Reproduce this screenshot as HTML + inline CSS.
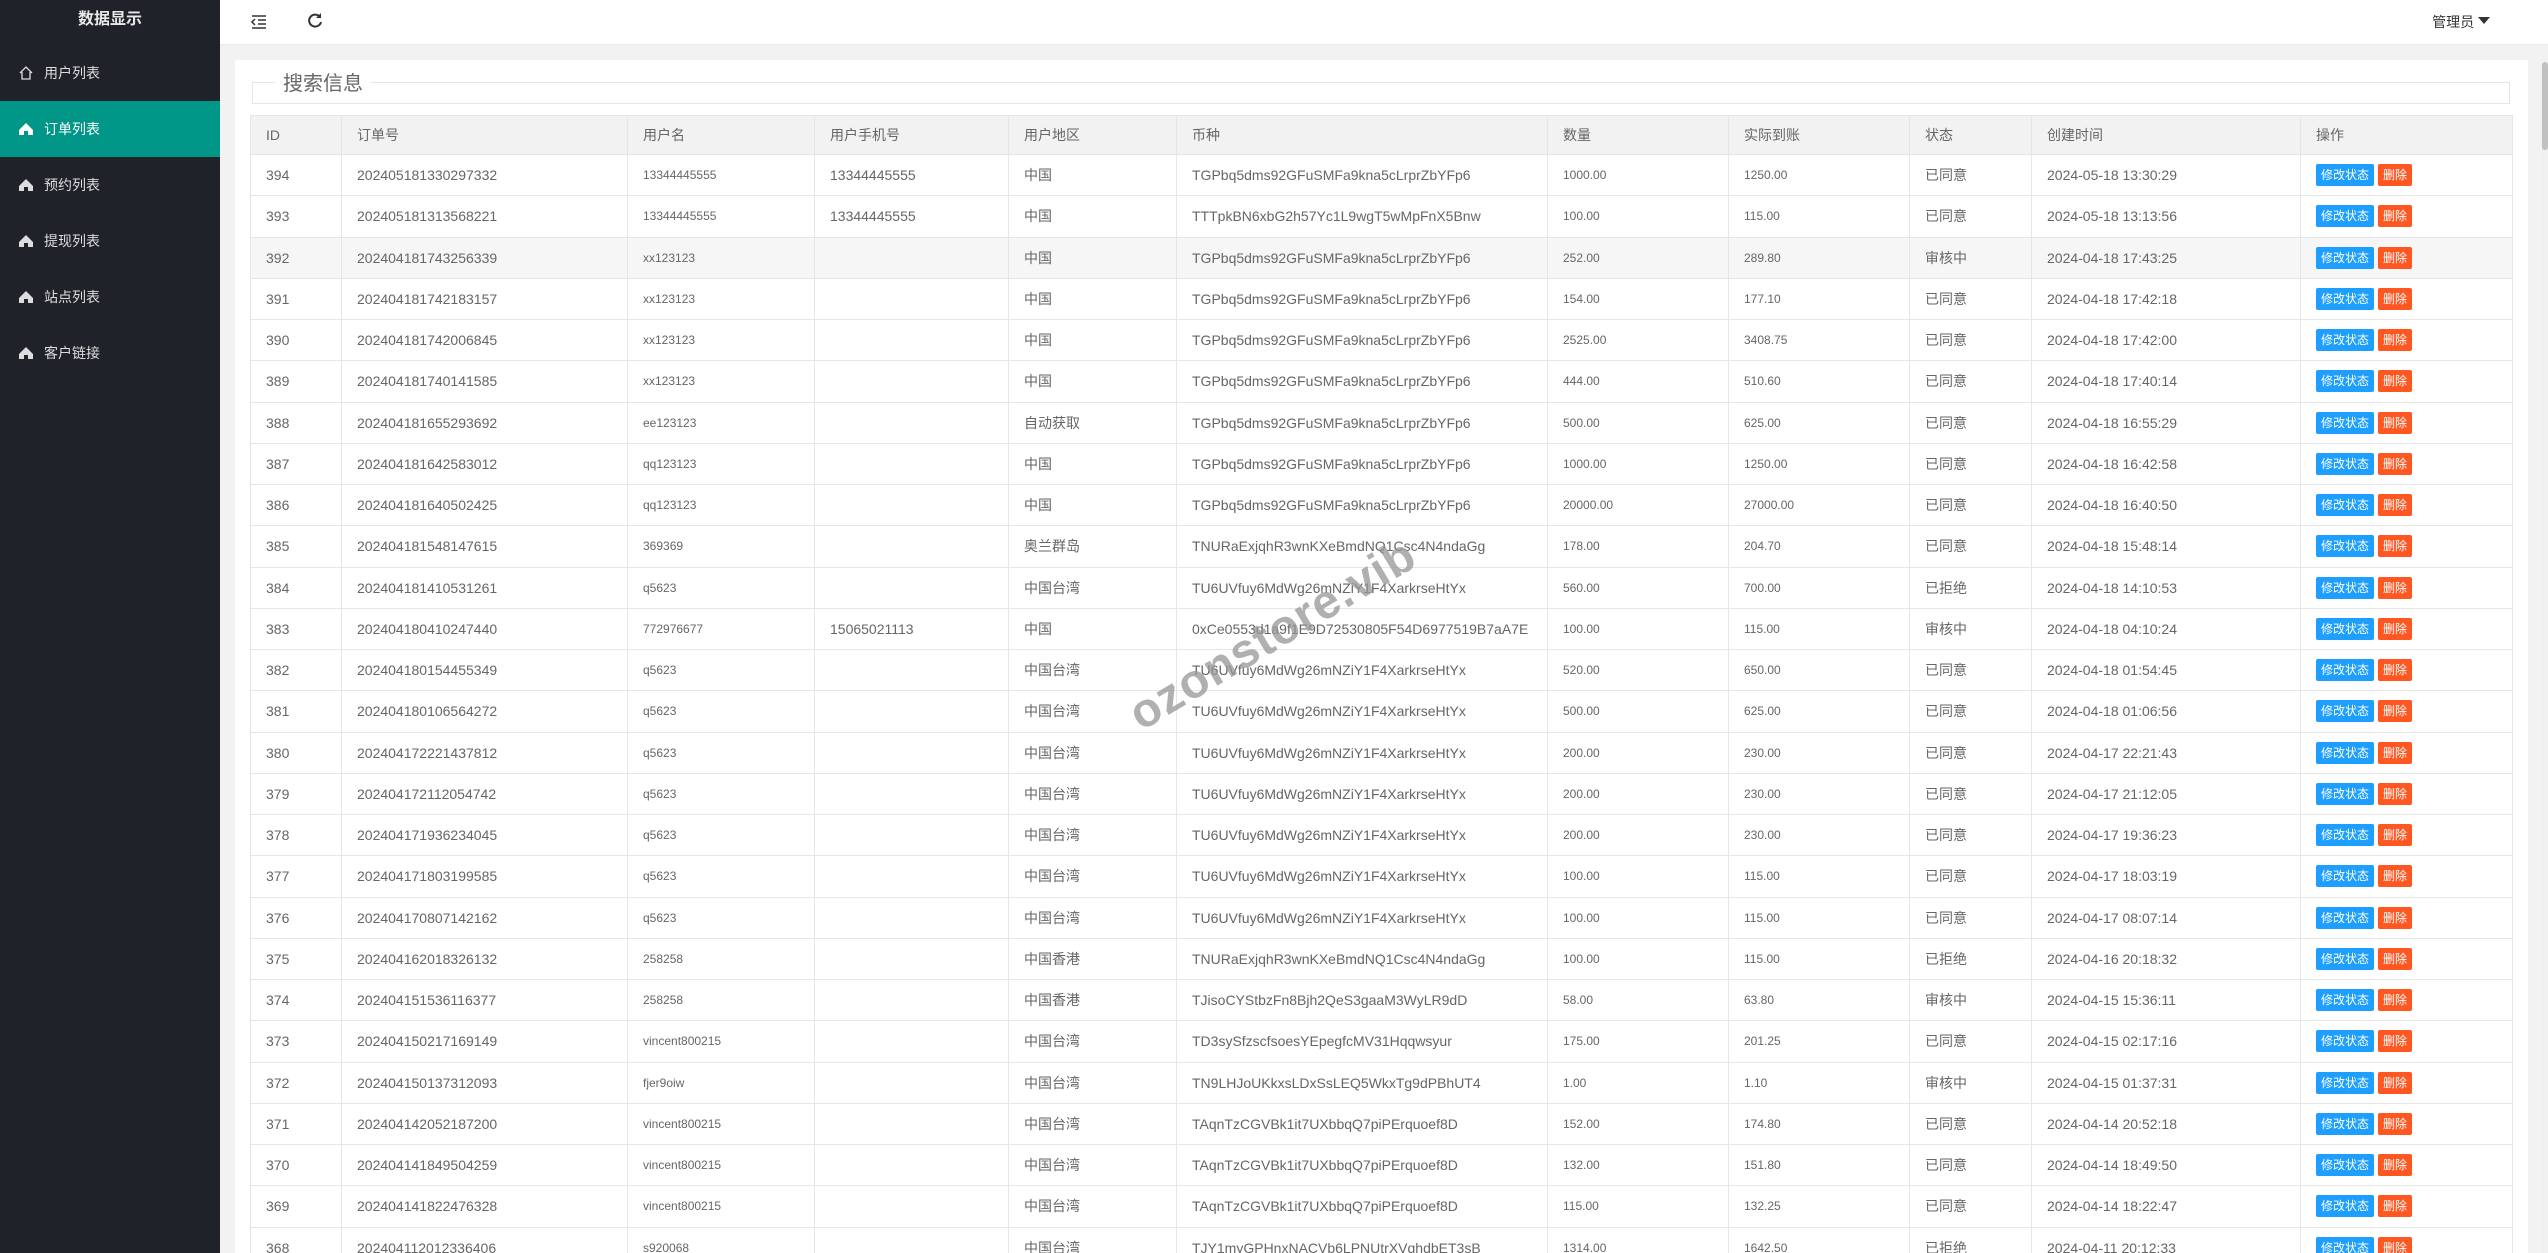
<!DOCTYPE html>
<html style="overflow:hidden;height:1253px"><head><meta charset="utf-8">
<style>
*{margin:0;padding:0;box-sizing:border-box}
body{width:2548px;height:1253px;overflow:hidden;background:#f2f2f2;font-family:"Liberation Sans","Noto Sans CJK SC",sans-serif;color:#666;position:relative}
.side{position:absolute;left:0;top:0;width:220px;height:1253px;background:#20222a}
.side .logo{height:45px;line-height:40px;text-align:center;color:#fff;font-size:16px;font-weight:bold;opacity:.9}
.side .it{position:absolute;left:0;width:220px;height:56px;line-height:56px;color:#ddd;font-size:14px;padding-left:44px}
.side .it.on{background:#009688;color:#fff}
.side .it svg{position:absolute;left:18px;top:20px}
.top{position:absolute;left:220px;top:0;right:0;height:45px;background:#fff;border-bottom:1px solid #eaeaea}
.card{position:absolute;left:235px;top:60px;width:2293px;height:1193px;background:#fff}
fieldset{position:absolute;left:252px;top:82px;width:2258px;height:22px;border:1px solid #e6e6e6;border-bottom-width:1px}
.legend{position:absolute;left:275px;top:67px;background:#fff;padding:0 8px;font-size:20px;color:#666}
table{position:absolute;left:250px;top:115px;width:2262px;border-collapse:collapse;table-layout:fixed}
td,th{border:1px solid #e6e6e6;padding:0 15px;font-size:14px;font-weight:normal;text-align:left;white-space:nowrap;overflow:hidden;color:#666}
th{height:39px;background:#f2f2f2}
td{height:41.25px}
td.s{font-size:12px}
tr.h td{background:#f6f6f6}
.b{display:inline-block;height:22px;line-height:22px;padding:0 5px;font-size:12px;color:#fff;background:#1e9fff;border-radius:2px;vertical-align:middle}
.b.r{background:#ff5722;margin-left:4px}
.wm{position:absolute;left:1110px;top:607px;font-size:48px;font-weight:bold;color:rgba(150,150,150,.75);transform:rotate(-31deg);letter-spacing:1px}
.sb{position:absolute;right:0;top:60px;width:6px;height:1193px;background:#f0f0f0}
.sb i{position:absolute;left:0;top:2px;width:6px;height:88px;background:#c1c1c1;border-radius:3px}
</style></head><body>
<div class="side">
<div class="logo">数据显示</div>
<div class="it" style="top:45px"><svg width="16" height="16" viewBox="0 0 16 16"><path d="M2 8 L8 2 L14 8 M4 7 V14 H12 V7" fill="none" stroke="#ddd" stroke-width="1.3"/></svg>用户列表</div>
<div class="it on" style="top:101px"><svg width="16" height="16" viewBox="0 0 16 16"><path d="M8 2 L15 9 V14 H10 V10 H6 V14 H1 V9 Z" fill="#fff"/></svg>订单列表</div>
<div class="it" style="top:157px"><svg width="16" height="16" viewBox="0 0 16 16"><path d="M8 2 L15 9 V14 H10 V10 H6 V14 H1 V9 Z" fill="#ddd"/></svg>预约列表</div>
<div class="it" style="top:213px"><svg width="16" height="16" viewBox="0 0 16 16"><path d="M8 2 L15 9 V14 H10 V10 H6 V14 H1 V9 Z" fill="#ddd"/></svg>提现列表</div>
<div class="it" style="top:269px"><svg width="16" height="16" viewBox="0 0 16 16"><path d="M8 2 L15 9 V14 H10 V10 H6 V14 H1 V9 Z" fill="#ddd"/></svg>站点列表</div>
<div class="it" style="top:325px"><svg width="16" height="16" viewBox="0 0 16 16"><path d="M8 2 L15 9 V14 H10 V10 H6 V14 H1 V9 Z" fill="#ddd"/></svg>客户链接</div>
</div>
<div class="top">
<svg style="position:absolute;left:30px;top:13px" width="18" height="18" viewBox="0 0 18 18"><path d="M2 3H16M8 7H16M8 11H16M2 15H16M5 6L2 9L5 12" fill="none" stroke="#333" stroke-width="1.5"/></svg>
<svg style="position:absolute;left:86px;top:12px" width="18" height="18" viewBox="0 0 18 18"><path d="M14 5A6 6 0 1 0 15 10" fill="none" stroke="#333" stroke-width="2"/><path d="M15 1V6H10Z" fill="#333"/></svg>
<div style="position:absolute;right:58px;top:12px;font-size:14px;color:#333">管理员 <span style="display:inline-block;border:6px solid transparent;border-top:7px solid #333;vertical-align:-3px"></span></div>
</div>
<div class="card"></div>
<fieldset></fieldset>
<div class="legend">搜索信息</div>
<table>
<colgroup><col style="width:91px"><col style="width:286px"><col style="width:187px"><col style="width:194px"><col style="width:168px"><col style="width:371px"><col style="width:181px"><col style="width:181px"><col style="width:122px"><col style="width:269px"><col style="width:212px"></colgroup>
<tr><th>ID</th><th>订单号</th><th>用户名</th><th>用户手机号</th><th>用户地区</th><th>币种</th><th>数量</th><th>实际到账</th><th>状态</th><th>创建时间</th><th>操作</th></tr>
<tbody>
<tr><td>394</td><td>202405181330297332</td><td class="s">13344445555</td><td>13344445555</td><td>中国</td><td>TGPbq5dms92GFuSMFa9kna5cLrprZbYFp6</td><td class="s">1000.00</td><td class="s">1250.00</td><td>已同意</td><td>2024-05-18 13:30:29</td><td><span class="b">修改状态</span><span class="b r">删除</span></td></tr>
<tr><td>393</td><td>202405181313568221</td><td class="s">13344445555</td><td>13344445555</td><td>中国</td><td>TTTpkBN6xbG2h57Yc1L9wgT5wMpFnX5Bnw</td><td class="s">100.00</td><td class="s">115.00</td><td>已同意</td><td>2024-05-18 13:13:56</td><td><span class="b">修改状态</span><span class="b r">删除</span></td></tr>
<tr class="h"><td>392</td><td>202404181743256339</td><td class="s">xx123123</td><td></td><td>中国</td><td>TGPbq5dms92GFuSMFa9kna5cLrprZbYFp6</td><td class="s">252.00</td><td class="s">289.80</td><td>审核中</td><td>2024-04-18 17:43:25</td><td><span class="b">修改状态</span><span class="b r">删除</span></td></tr>
<tr><td>391</td><td>202404181742183157</td><td class="s">xx123123</td><td></td><td>中国</td><td>TGPbq5dms92GFuSMFa9kna5cLrprZbYFp6</td><td class="s">154.00</td><td class="s">177.10</td><td>已同意</td><td>2024-04-18 17:42:18</td><td><span class="b">修改状态</span><span class="b r">删除</span></td></tr>
<tr><td>390</td><td>202404181742006845</td><td class="s">xx123123</td><td></td><td>中国</td><td>TGPbq5dms92GFuSMFa9kna5cLrprZbYFp6</td><td class="s">2525.00</td><td class="s">3408.75</td><td>已同意</td><td>2024-04-18 17:42:00</td><td><span class="b">修改状态</span><span class="b r">删除</span></td></tr>
<tr><td>389</td><td>202404181740141585</td><td class="s">xx123123</td><td></td><td>中国</td><td>TGPbq5dms92GFuSMFa9kna5cLrprZbYFp6</td><td class="s">444.00</td><td class="s">510.60</td><td>已同意</td><td>2024-04-18 17:40:14</td><td><span class="b">修改状态</span><span class="b r">删除</span></td></tr>
<tr><td>388</td><td>202404181655293692</td><td class="s">ee123123</td><td></td><td>自动获取</td><td>TGPbq5dms92GFuSMFa9kna5cLrprZbYFp6</td><td class="s">500.00</td><td class="s">625.00</td><td>已同意</td><td>2024-04-18 16:55:29</td><td><span class="b">修改状态</span><span class="b r">删除</span></td></tr>
<tr><td>387</td><td>202404181642583012</td><td class="s">qq123123</td><td></td><td>中国</td><td>TGPbq5dms92GFuSMFa9kna5cLrprZbYFp6</td><td class="s">1000.00</td><td class="s">1250.00</td><td>已同意</td><td>2024-04-18 16:42:58</td><td><span class="b">修改状态</span><span class="b r">删除</span></td></tr>
<tr><td>386</td><td>202404181640502425</td><td class="s">qq123123</td><td></td><td>中国</td><td>TGPbq5dms92GFuSMFa9kna5cLrprZbYFp6</td><td class="s">20000.00</td><td class="s">27000.00</td><td>已同意</td><td>2024-04-18 16:40:50</td><td><span class="b">修改状态</span><span class="b r">删除</span></td></tr>
<tr><td>385</td><td>202404181548147615</td><td class="s">369369</td><td></td><td>奥兰群岛</td><td>TNURaExjqhR3wnKXeBmdNQ1Csc4N4ndaGg</td><td class="s">178.00</td><td class="s">204.70</td><td>已同意</td><td>2024-04-18 15:48:14</td><td><span class="b">修改状态</span><span class="b r">删除</span></td></tr>
<tr><td>384</td><td>202404181410531261</td><td class="s">q5623</td><td></td><td>中国台湾</td><td>TU6UVfuy6MdWg26mNZiY1F4XarkrseHtYx</td><td class="s">560.00</td><td class="s">700.00</td><td>已拒绝</td><td>2024-04-18 14:10:53</td><td><span class="b">修改状态</span><span class="b r">删除</span></td></tr>
<tr><td>383</td><td>202404180410247440</td><td class="s">772976677</td><td>15065021113</td><td>中国</td><td>0xCe0553d1a9f1E9D72530805F54D6977519B7aA7E</td><td class="s">100.00</td><td class="s">115.00</td><td>审核中</td><td>2024-04-18 04:10:24</td><td><span class="b">修改状态</span><span class="b r">删除</span></td></tr>
<tr><td>382</td><td>202404180154455349</td><td class="s">q5623</td><td></td><td>中国台湾</td><td>TU6UVfuy6MdWg26mNZiY1F4XarkrseHtYx</td><td class="s">520.00</td><td class="s">650.00</td><td>已同意</td><td>2024-04-18 01:54:45</td><td><span class="b">修改状态</span><span class="b r">删除</span></td></tr>
<tr><td>381</td><td>202404180106564272</td><td class="s">q5623</td><td></td><td>中国台湾</td><td>TU6UVfuy6MdWg26mNZiY1F4XarkrseHtYx</td><td class="s">500.00</td><td class="s">625.00</td><td>已同意</td><td>2024-04-18 01:06:56</td><td><span class="b">修改状态</span><span class="b r">删除</span></td></tr>
<tr><td>380</td><td>202404172221437812</td><td class="s">q5623</td><td></td><td>中国台湾</td><td>TU6UVfuy6MdWg26mNZiY1F4XarkrseHtYx</td><td class="s">200.00</td><td class="s">230.00</td><td>已同意</td><td>2024-04-17 22:21:43</td><td><span class="b">修改状态</span><span class="b r">删除</span></td></tr>
<tr><td>379</td><td>202404172112054742</td><td class="s">q5623</td><td></td><td>中国台湾</td><td>TU6UVfuy6MdWg26mNZiY1F4XarkrseHtYx</td><td class="s">200.00</td><td class="s">230.00</td><td>已同意</td><td>2024-04-17 21:12:05</td><td><span class="b">修改状态</span><span class="b r">删除</span></td></tr>
<tr><td>378</td><td>202404171936234045</td><td class="s">q5623</td><td></td><td>中国台湾</td><td>TU6UVfuy6MdWg26mNZiY1F4XarkrseHtYx</td><td class="s">200.00</td><td class="s">230.00</td><td>已同意</td><td>2024-04-17 19:36:23</td><td><span class="b">修改状态</span><span class="b r">删除</span></td></tr>
<tr><td>377</td><td>202404171803199585</td><td class="s">q5623</td><td></td><td>中国台湾</td><td>TU6UVfuy6MdWg26mNZiY1F4XarkrseHtYx</td><td class="s">100.00</td><td class="s">115.00</td><td>已同意</td><td>2024-04-17 18:03:19</td><td><span class="b">修改状态</span><span class="b r">删除</span></td></tr>
<tr><td>376</td><td>202404170807142162</td><td class="s">q5623</td><td></td><td>中国台湾</td><td>TU6UVfuy6MdWg26mNZiY1F4XarkrseHtYx</td><td class="s">100.00</td><td class="s">115.00</td><td>已同意</td><td>2024-04-17 08:07:14</td><td><span class="b">修改状态</span><span class="b r">删除</span></td></tr>
<tr><td>375</td><td>202404162018326132</td><td class="s">258258</td><td></td><td>中国香港</td><td>TNURaExjqhR3wnKXeBmdNQ1Csc4N4ndaGg</td><td class="s">100.00</td><td class="s">115.00</td><td>已拒绝</td><td>2024-04-16 20:18:32</td><td><span class="b">修改状态</span><span class="b r">删除</span></td></tr>
<tr><td>374</td><td>202404151536116377</td><td class="s">258258</td><td></td><td>中国香港</td><td>TJisoCYStbzFn8Bjh2QeS3gaaM3WyLR9dD</td><td class="s">58.00</td><td class="s">63.80</td><td>审核中</td><td>2024-04-15 15:36:11</td><td><span class="b">修改状态</span><span class="b r">删除</span></td></tr>
<tr><td>373</td><td>202404150217169149</td><td class="s">vincent800215</td><td></td><td>中国台湾</td><td>TD3sySfzscfsoesYEpegfcMV31Hqqwsyur</td><td class="s">175.00</td><td class="s">201.25</td><td>已同意</td><td>2024-04-15 02:17:16</td><td><span class="b">修改状态</span><span class="b r">删除</span></td></tr>
<tr><td>372</td><td>202404150137312093</td><td class="s">fjer9oiw</td><td></td><td>中国台湾</td><td>TN9LHJoUKkxsLDxSsLEQ5WkxTg9dPBhUT4</td><td class="s">1.00</td><td class="s">1.10</td><td>审核中</td><td>2024-04-15 01:37:31</td><td><span class="b">修改状态</span><span class="b r">删除</span></td></tr>
<tr><td>371</td><td>202404142052187200</td><td class="s">vincent800215</td><td></td><td>中国台湾</td><td>TAqnTzCGVBk1it7UXbbqQ7piPErquoef8D</td><td class="s">152.00</td><td class="s">174.80</td><td>已同意</td><td>2024-04-14 20:52:18</td><td><span class="b">修改状态</span><span class="b r">删除</span></td></tr>
<tr><td>370</td><td>202404141849504259</td><td class="s">vincent800215</td><td></td><td>中国台湾</td><td>TAqnTzCGVBk1it7UXbbqQ7piPErquoef8D</td><td class="s">132.00</td><td class="s">151.80</td><td>已同意</td><td>2024-04-14 18:49:50</td><td><span class="b">修改状态</span><span class="b r">删除</span></td></tr>
<tr><td>369</td><td>202404141822476328</td><td class="s">vincent800215</td><td></td><td>中国台湾</td><td>TAqnTzCGVBk1it7UXbbqQ7piPErquoef8D</td><td class="s">115.00</td><td class="s">132.25</td><td>已同意</td><td>2024-04-14 18:22:47</td><td><span class="b">修改状态</span><span class="b r">删除</span></td></tr>
<tr><td>368</td><td>202404112012336406</td><td class="s">s920068</td><td></td><td>中国台湾</td><td>TJY1myGPHnxNACVb6LPNUtrXVqhdbET3sB</td><td class="s">1314.00</td><td class="s">1642.50</td><td>已拒绝</td><td>2024-04-11 20:12:33</td><td><span class="b">修改状态</span><span class="b r">删除</span></td></tr>
</tbody></table>
<div class="wm">ozonstore.vib</div>
<div class="sb"><i></i></div>
</body></html>
